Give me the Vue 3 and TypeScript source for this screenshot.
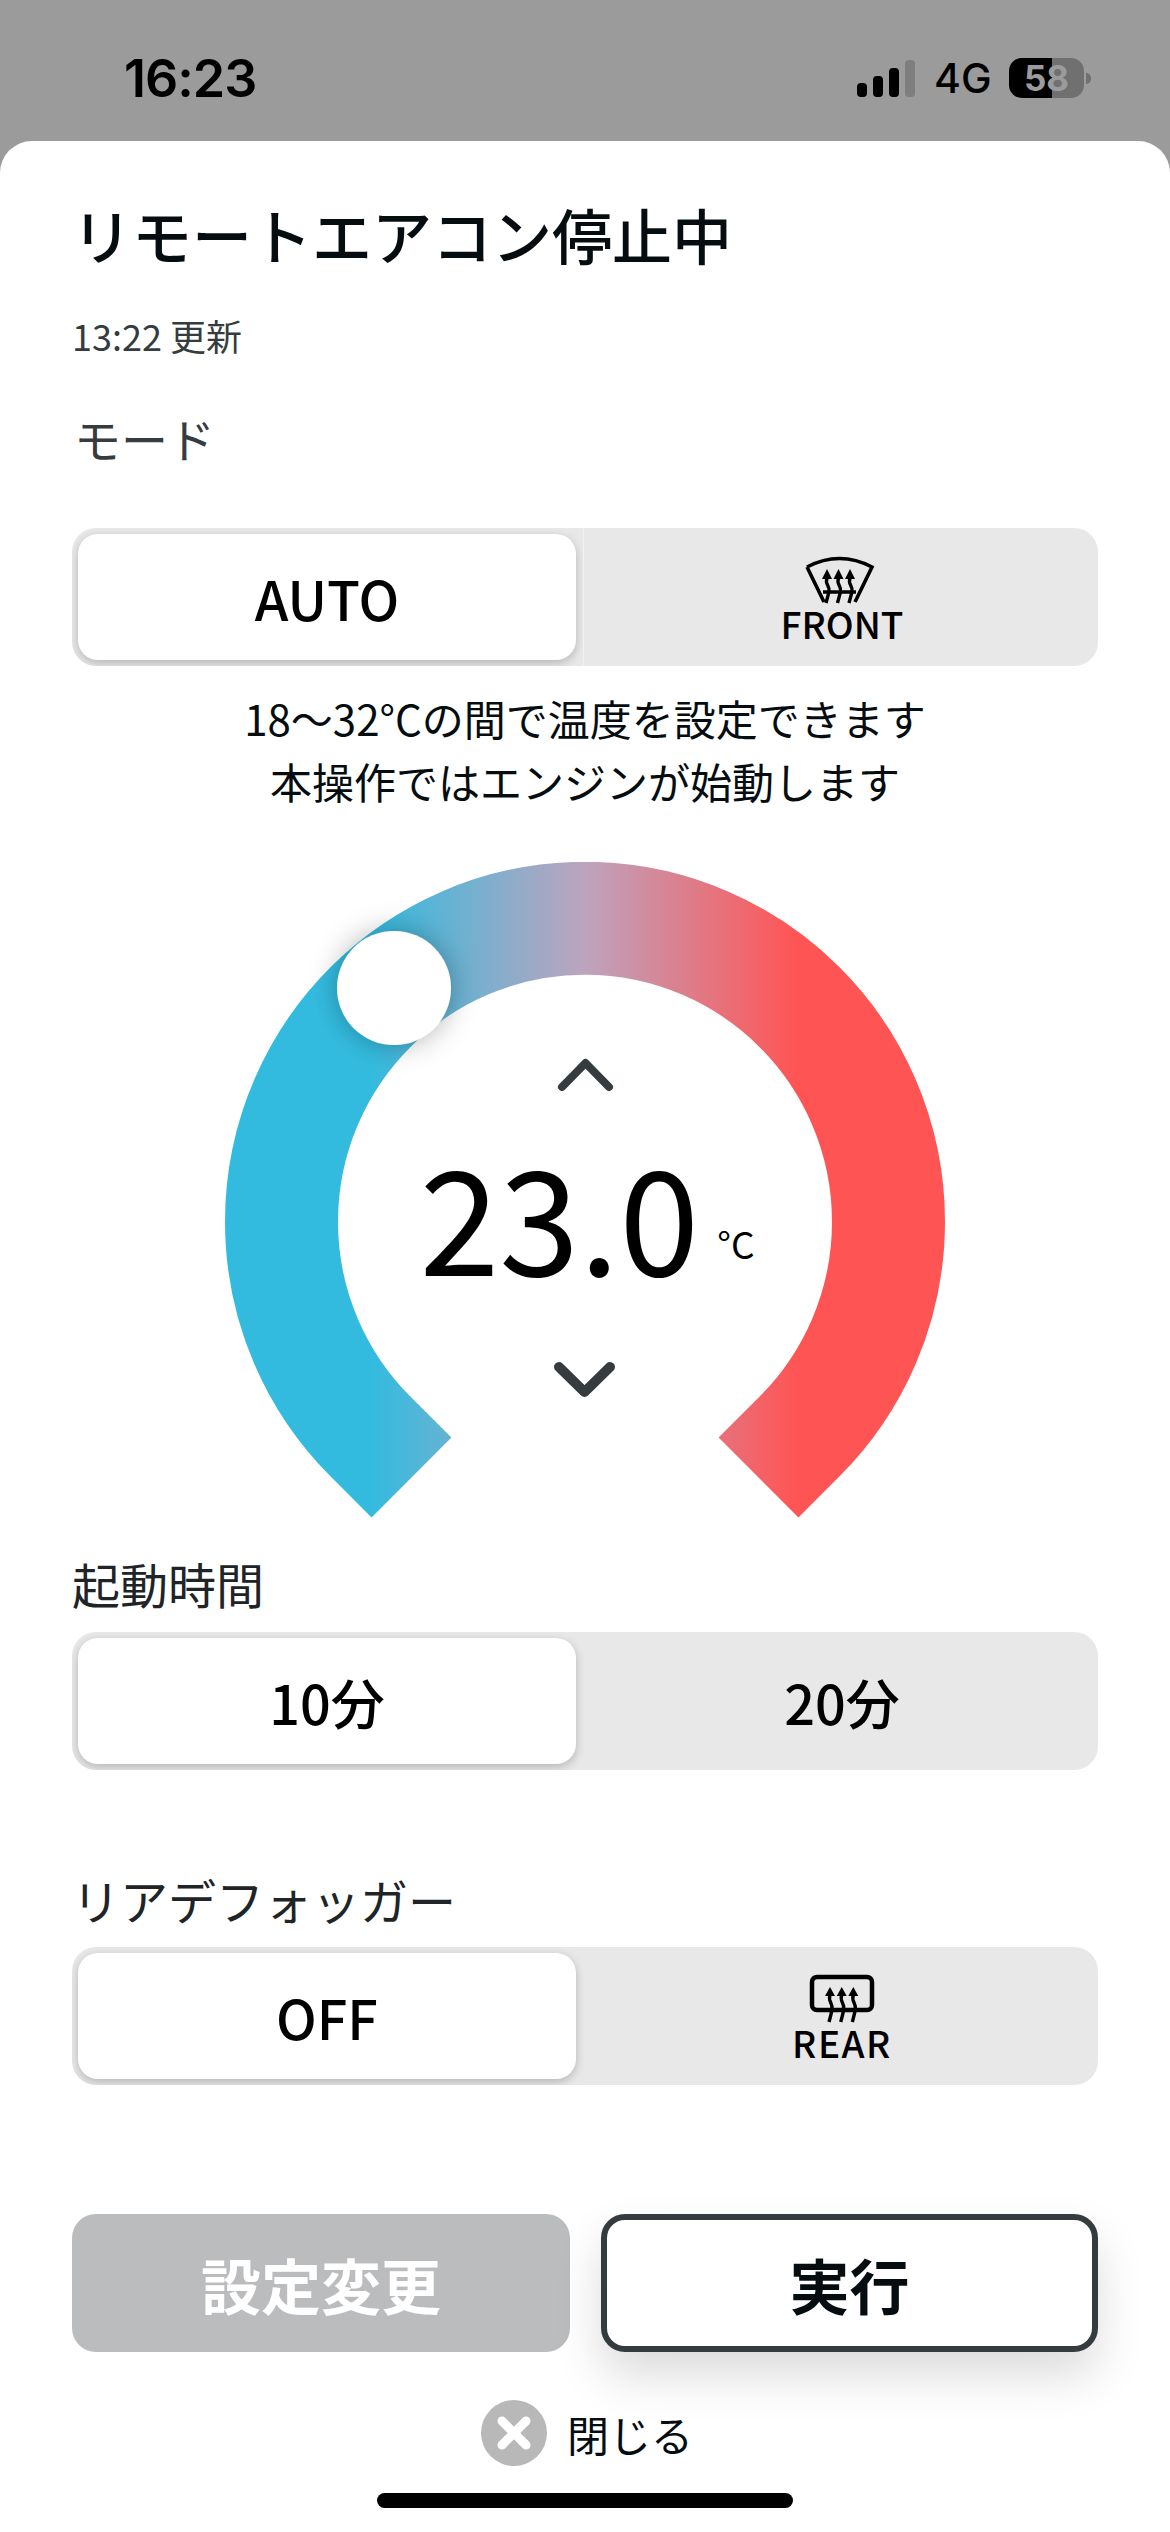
<template>
  <div class="screen">
    <header class="status-bar">
      <span class="clock">16:23</span>
      <div class="status-icons">
        <div class="signal">
          <i class="bar b1"></i>
          <i class="bar b2"></i>
          <i class="bar b3"></i>
          <i class="bar b4 off"></i>
        </div>
        <span class="network">4G</span>
        <div class="battery">
          <div class="battery-body" :style="{ background: batteryFill }">58</div>
          <i class="battery-nub"></i>
        </div>
      </div>
    </header>

    <main class="sheet">
      <h1 class="title">リモートエアコン停止中</h1>
      <p class="updated">13:22 更新</p>
      <p class="label mode-label">モード</p>

      <div class="segment">
        <div class="seg-item active">AUTO</div>
        <div class="seg-item divided">
          <svg class="seg-icon front" width="80" height="50" viewBox="0 0 80 50">
            <path class="icon-line" d="M5 13 Q37.5 -4 70 13 L53 48 M5 13 L22 48 M21 38 H54" />
            <g v-for="x in [25, 36.5, 48]" :key="x">
              <path class="icon-stem" :d="`M${x} 24 c-2.5 6 3 8 2 13 c-.6 4 -2 8 -3 12`" />
              <path class="icon-head" :d="`M${x} 15 l5 10 h-10 z`" />
            </g>
          </svg>
          <span class="seg-caption">FRONT</span>
        </div>
      </div>

      <p class="note">18〜32°Cの間で温度を設定できます<br />本操作ではエンジンが始動します</p>

      <div class="gauge">
        <svg width="720" height="660" viewBox="0 0 720 660">
          <defs>
            <linearGradient id="ring" gradientUnits="userSpaceOnUse" x1="147" y1="0" x2="572" y2="0">
              <stop offset="0" stop-color="#33bbdf" />
              <stop offset="0.5" stop-color="#bda4be" />
              <stop offset="1" stop-color="#ff5454" />
            </linearGradient>
            <filter id="knob-shadow" x="-60%" y="-60%" width="220%" height="220%">
              <feDropShadow dx="0" dy="0" stdDeviation="14" flood-color="#000" flood-opacity="0.3" />
            </filter>
          </defs>
          <path :d="ringPath" fill="none" stroke="url(#ring)" stroke-width="113" />
          <circle cx="169" cy="126" r="57" fill="#fff" filter="url(#knob-shadow)" />
        </svg>
        <div class="readout">
          <svg class="chevron" width="64" height="44" viewBox="0 0 64 44">
            <path d="M9 35 L32.5 11 L56 35" />
          </svg>
          <div class="temp">
            <span class="temp-value">{{ temperature.toFixed(1) }}</span>
            <span class="temp-unit">°C</span>
          </div>
          <svg class="chevron down" width="64" height="48" viewBox="0 0 64 48">
            <path d="M6 11 L31.5 36 L57 11" />
          </svg>
        </div>
      </div>

      <p class="label time-label">起動時間</p>
      <div class="segment">
        <div class="seg-item active">10分</div>
        <div class="seg-item">20分</div>
      </div>

      <p class="label rear-label">リアデフォッガー</p>
      <div class="segment">
        <div class="seg-item active">OFF</div>
        <div class="seg-item">
          <svg class="seg-icon rear" width="70" height="50" viewBox="0 0 70 50">
            <rect class="icon-line thick" x="5" y="4" width="60" height="33" rx="5" />
            <g v-for="x in [23, 34.7, 46.3]" :key="x">
              <path class="icon-stem" :d="`M${x} 22 c-2.5 6 3 8 2 14 c-.6 5 -2 9 -3 13`" />
              <path class="icon-head" :d="`M${x} 14 l5 9 h-10 z`" />
            </g>
          </svg>
          <span class="seg-caption wide">REAR</span>
        </div>
      </div>

      <div class="actions">
        <button class="btn disabled">設定変更</button>
        <button class="btn primary">実行</button>
      </div>

      <div class="close">
        <svg width="66" height="66" viewBox="0 0 66 66">
          <circle cx="33" cy="33" r="33" fill="#b8b8b8" />
          <path d="M21 21 L45 45 M45 21 L21 45" stroke="#fff" stroke-width="9" stroke-linecap="round" />
        </svg>
        <span>閉じる</span>
      </div>

      <div class="home-indicator"></div>
    </main>
  </div>
</template>

<script setup lang="ts">
const temperature = 23.0
const batteryLevel = 58

// split colour for the battery, hard edge at the charge level
const batteryFill = `linear-gradient(90deg, #000 ${batteryLevel}%, #707070 ${batteryLevel}%)`

// 270 degree arc, with short tangent legs at both open ends
const ringPath = 'M186.5 615.5 L145.4 574.4 A303.5 303.5 0 1 1 574.6 574.4 L533.5 615.5'
</script>

<style>
html,
body {
  margin: 0;
  background: #fff;
}
</style>

<style scoped>
.screen {
  width: 1170px;
  height: 2532px;
  overflow: hidden;
  display: flex;
  flex-direction: column;
  background: #9b9b9b;
  font-family: "Noto Sans CJK JP", "Noto Sans", sans-serif;
  color: #060d10;
}

.status-bar {
  height: 141px;
  flex: none;
  box-sizing: border-box;
  padding: 49px 79px 0 124px;
  display: flex;
  justify-content: space-between;
  align-items: flex-start;
  color: #000;
  font-family: Inter, "Liberation Sans", sans-serif;
}

.clock {
  font-size: 52px;
  line-height: 60px;
  font-weight: 600;
  letter-spacing: -1px;
}

.status-icons {
  display: flex;
  align-items: center;
  height: 60px;
  margin-top: -1px;
}

.signal {
  display: flex;
  align-items: flex-end;
  gap: 6px;
  height: 37px;
  margin-top: 1px;
}

.bar {
  display: block;
  width: 10px;
  border-radius: 4px;
  background: #000;
}

.b1 { height: 14px; }
.b2 { height: 21px; }
.b3 { height: 29px; }
.b4 { height: 37px; }
.off { background: #7e7e7e; }

.network {
  font-size: 41px;
  line-height: 60px;
  font-weight: 500;
  margin-left: 19px;
  width: 75px;
}

.battery {
  display: flex;
  align-items: center;
  gap: 2px;
}

.battery-body {
  width: 75px;
  height: 40px;
  border-radius: 13px;
  text-align: center;
  font-size: 35px;
  line-height: 40px;
  font-weight: 700;
  color: #9b9b9b;
}

.battery-nub {
  display: block;
  width: 5px;
  height: 11px;
  border-radius: 0 6px 6px 0;
  background: #707070;
}

.sheet {
  flex: 1;
  background: #fff;
  border-radius: 32px 32px 0 0;
  padding: 58px 72px 0;
}

.title {
  margin: 0;
  font-size: 60px;
  line-height: 70px;
  font-weight: 500;
}

.updated {
  margin: 46px 0 0;
  font-size: 36px;
  line-height: 40px;
  color: #353c40;
}

.label {
  margin: 0;
  height: 56px;
  font-size: 48px;
  line-height: 56px;
  color: #202427;
}

.mode-label {
  margin-top: 55px;
  margin-bottom: 62px;
  font-size: 47px;
  padding-left: 2px;
  color: #353c40;
}

.time-label {
  margin-top: 33px;
  margin-bottom: 21px;
}

.rear-label {
  margin-top: 101px;
  margin-bottom: 20px;
}

.segment {
  height: 138px;
  box-sizing: border-box;
  padding: 6px 0 6px 6px;
  display: grid;
  grid-template-columns: 498px 1fr;
  background: #e8e8e8;
  border-radius: 24px;
  overflow: hidden;
}

.seg-item {
  display: flex;
  flex-direction: column;
  align-items: center;
  justify-content: center;
  padding-left: 10px;
  font-size: 54px;
  font-weight: 500;
  color: #000;
}

.active {
  padding-left: 0;
  background: #fff;
  border-radius: 20px;
  box-shadow: 0 3px 10px rgba(0, 0, 0, 0.22);
  position: relative;
}

/* hairline between the two halves, only on the mode switch */
.divided {
  position: relative;
}

.divided::before {
  content: "";
  position: absolute;
  left: 7px;
  top: -6px;
  bottom: -6px;
  width: 1px;
  background: #f1f1f1;
}

.seg-caption {
  font-size: 37px;
  line-height: 34px;
}

.seg-caption.wide {
  letter-spacing: 1.5px;
}

.seg-icon {
  display: block;
  margin-bottom: 2px;
}

.icon-line {
  fill: none;
  stroke: #000;
  stroke-width: 3.6;
  stroke-linecap: butt;
}

.icon-line.thick {
  stroke-width: 4.5;
}

.icon-stem {
  fill: none;
  stroke: #000;
  stroke-width: 3.4;
}

.icon-head {
  fill: #000;
}

.note {
  margin: 20px 0 0;
  text-align: center;
  font-size: 42px;
  line-height: 63px;
}

.gauge {
  position: relative;
  width: 720px;
  height: 660px;
  margin: 50px auto 0;
}

.gauge > svg {
  display: block;
}

.readout {
  position: absolute;
  left: 0;
  right: 0;
  top: 190px;
  display: flex;
  flex-direction: column;
  align-items: center;
}

.chevron {
  display: block;
}

.chevron path {
  fill: none;
  stroke: #353c40;
  stroke-width: 8;
  stroke-linecap: round;
  stroke-linejoin: round;
}

.chevron.down path {
  stroke-width: 10;
}

.temp {
  display: flex;
  align-items: center;
  gap: 18px;
  height: 200px;
  margin: 17px 0 43px;
  padding-left: 4px;
  color: #000;
}

.temp-value {
  font-size: 144px;
  line-height: 200px;
  font-weight: 400;
}

.temp-unit {
  font-size: 37px;
  line-height: 48px;
  margin-top: 60px;
}

.actions {
  margin-top: 129px;
  display: grid;
  grid-template-columns: 498px 497px;
  justify-content: space-between;
}

.btn {
  height: 138px;
  box-sizing: border-box;
  border-radius: 24px;
  border: 0;
  font-family: inherit;
  font-size: 60px;
  font-weight: 700;
  padding: 0;
}

.disabled {
  background: #bbbcbe;
  color: #fff;
}

.primary {
  background: #fff;
  border: 6px solid #353c40;
  color: #060d10;
  box-shadow: 0 24px 48px rgba(0, 0, 0, 0.14);
}

.close {
  margin-top: 48px;
  height: 66px;
  display: flex;
  justify-content: center;
  align-items: center;
  gap: 20px;
  font-size: 42px;
  padding-left: 4px;
}

.close svg {
  display: block;
}

.home-indicator {
  width: 416px;
  height: 15px;
  margin: 27px auto 0;
  border-radius: 8px;
  background: #000;
}
</style>
